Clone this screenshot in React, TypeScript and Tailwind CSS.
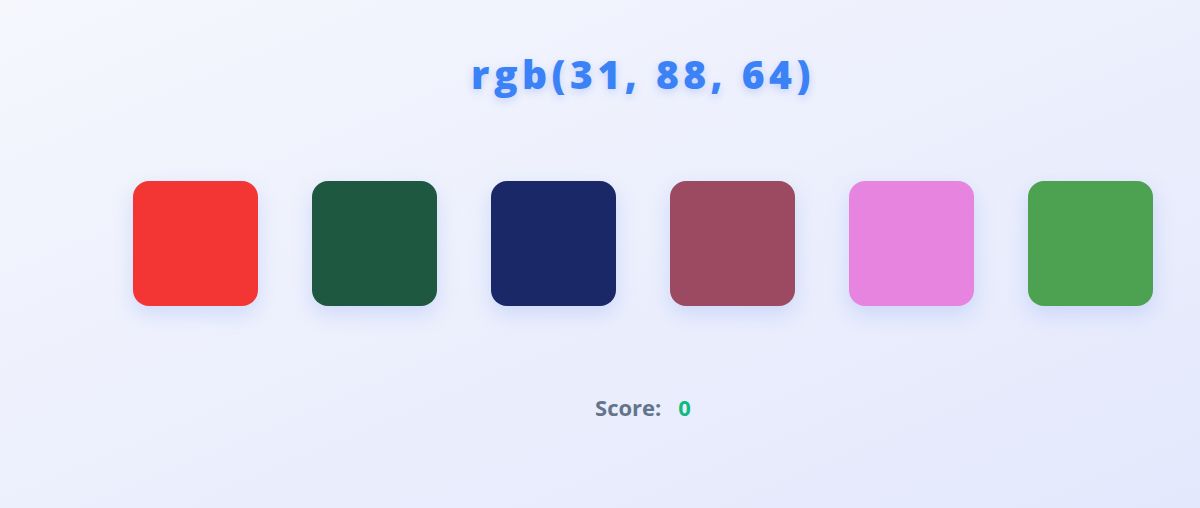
const colors = [
  "rgb(243, 54, 52)",
  "rgb(31, 88, 64)",
  "rgb(26, 40, 104)",
  "rgb(155, 74, 97)",
  "rgb(230, 132, 224)",
  "rgb(77, 162, 81)",
];

export default function App() {
  return (
    <div className="min-h-[508px] w-full bg-gradient-to-br from-[#f5f7fd] to-[#e3e8fc] pl-[86px] font-['Open_Sans',sans-serif]">
      <div className="flex flex-col items-center">
        {/* Target colour */}
        <h1 className="mt-[46px] text-[39px] leading-[56px] font-extrabold tracking-[0.115em] text-[#3b82f6] [text-shadow:0_3px_8px_rgba(99,130,246,0.3)]">
          rgb(31, 88, 64)
        </h1>

        {/* Swatches */}
        <div className="mt-[79px] flex gap-[54px]">
          {colors.map((c) => (
            <button
              key={c}
              type="button"
              className="h-[125px] w-[125px] rounded-2xl shadow-[0_8px_20px_rgba(120,150,245,0.25)]"
              style={{ backgroundColor: c }}
            />
          ))}
        </div>

        {/* Score */}
        <div className="mt-[85px] flex items-center gap-[17px] text-[22px] leading-[33px] font-bold">
          <span className="text-[#64748b]">Score:</span>
          <span className="text-[#10b981]">0</span>
        </div>
      </div>
    </div>
  );
}
